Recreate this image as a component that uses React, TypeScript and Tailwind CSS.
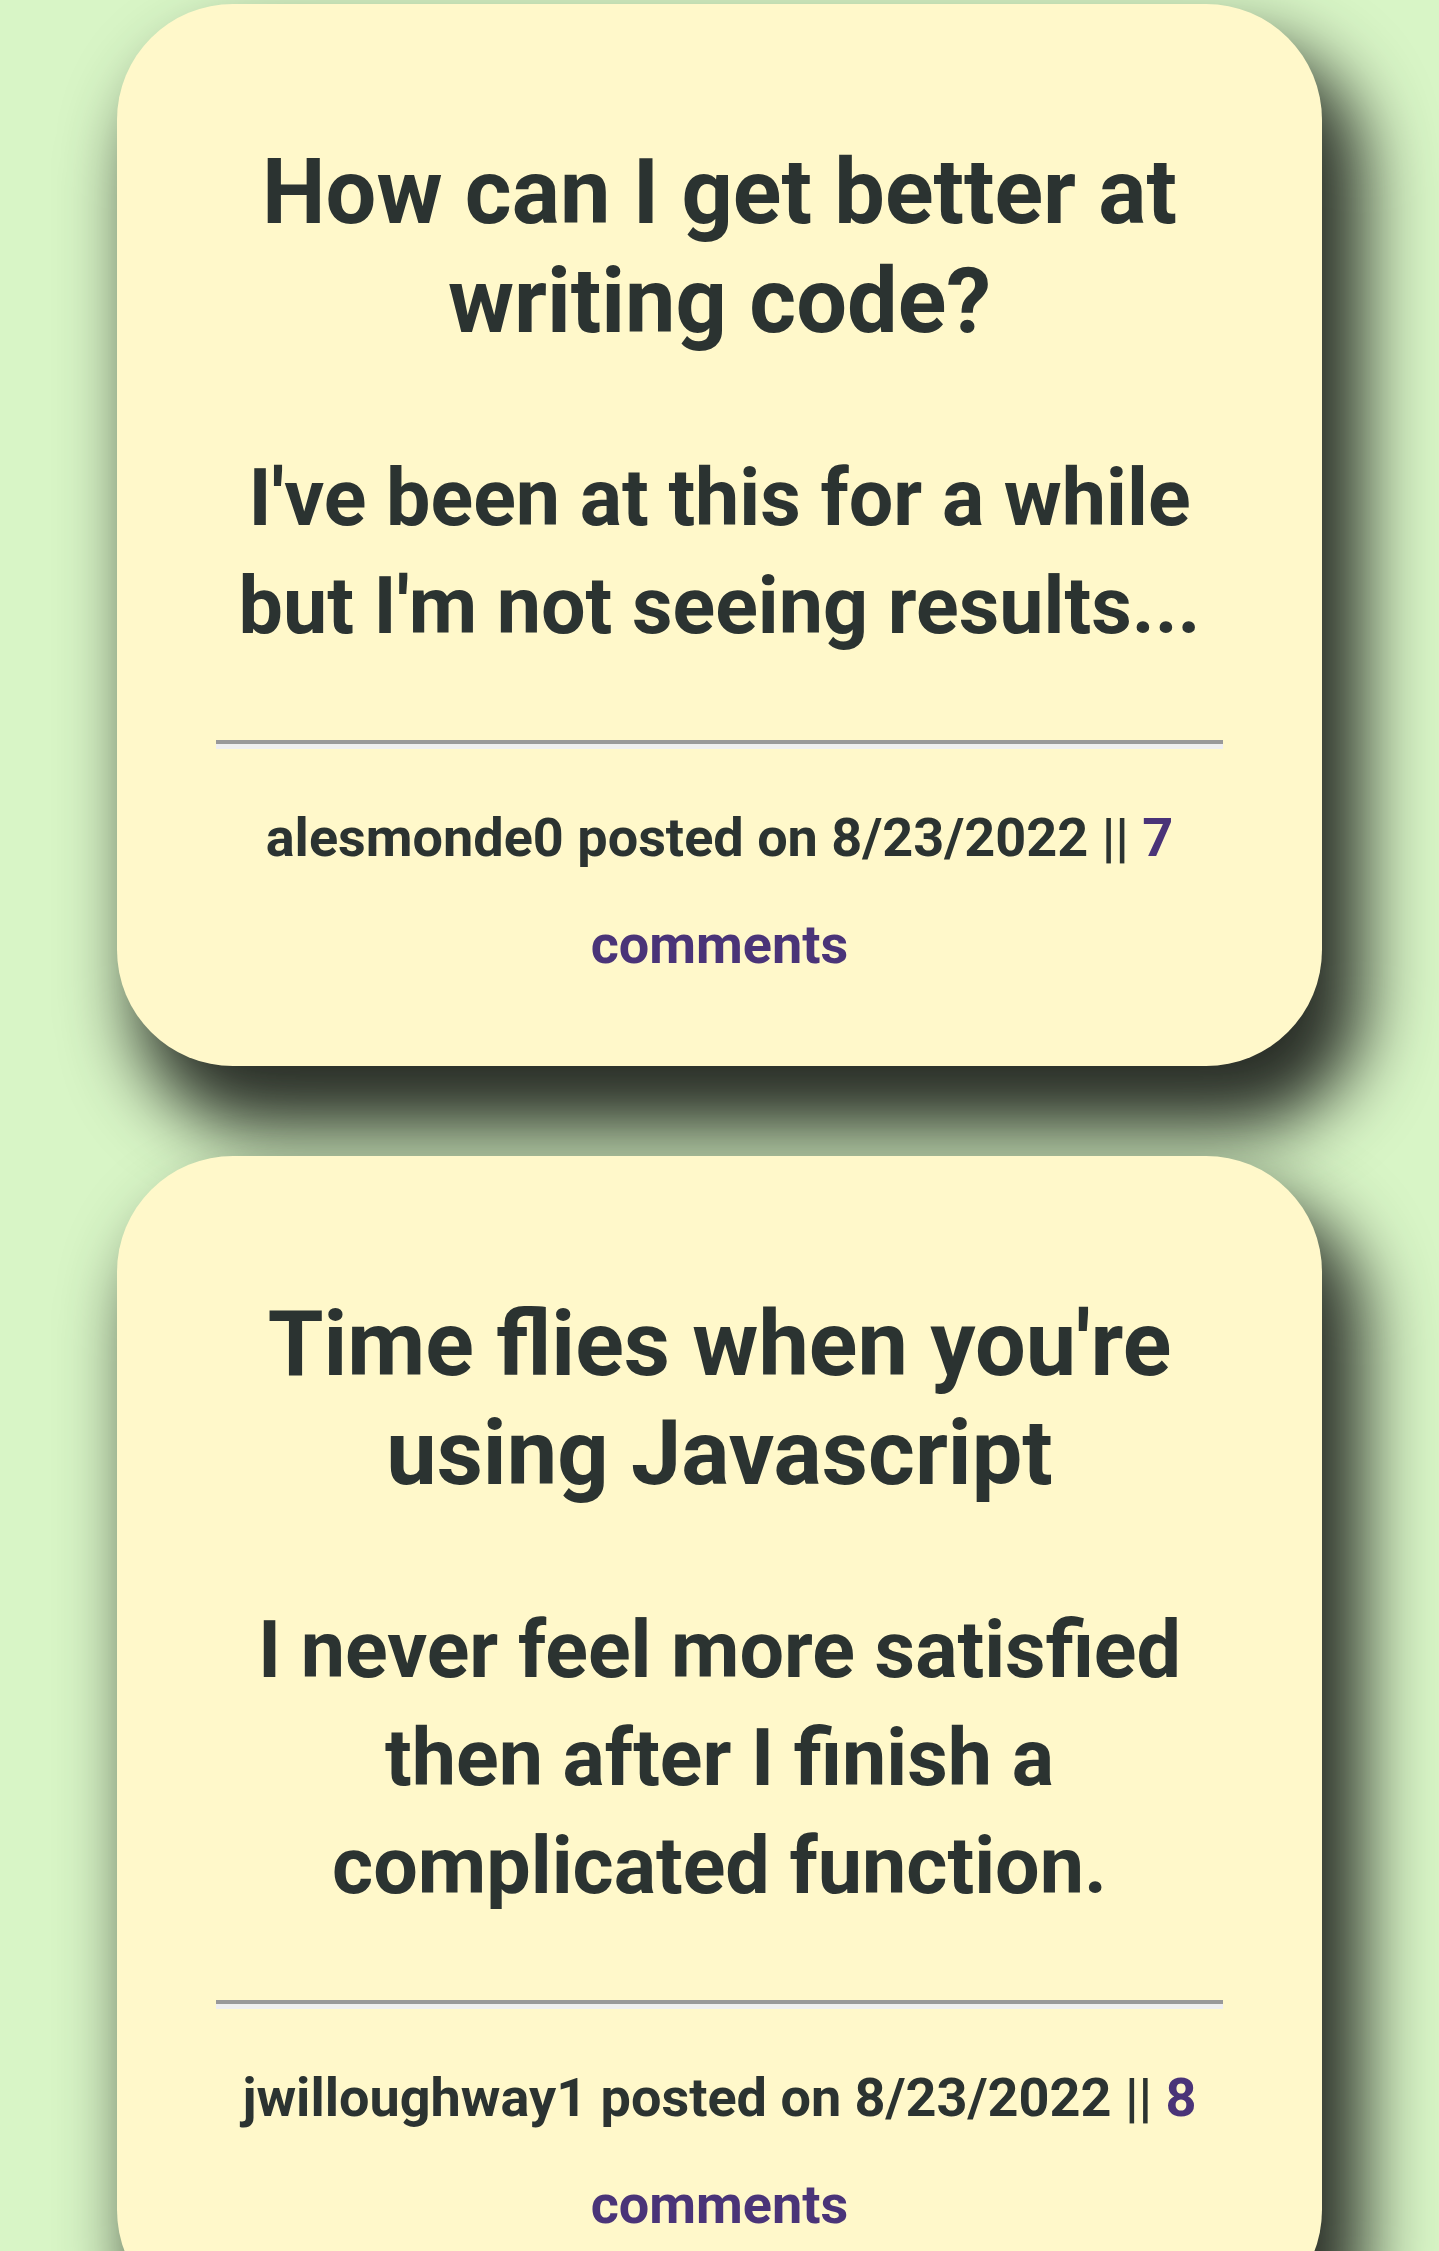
const posts = [
  {
    title: "How can I get better at writing code?",
    body: "I've been at this for a while but I'm not seeing results...",
    author: "alesmonde0",
    date: "8/23/2022",
    comments: 7,
  },
  {
    title: "Time flies when you're using Javascript",
    body: "I never feel more satisfied then after I finish a complicated function.",
    author: "jwilloughway1",
    date: "8/23/2022",
    comments: 8,
  },
];

const App = () => {
  return (
    <div className="min-h-screen bg-[#d8f5c6] font-['Roboto',sans-serif] text-[#2b3331] pt-[4px] pb-24">
      <div className="flex flex-col items-center gap-[90px]">
        {posts.map((post, i) => (
          <div
            key={i}
            className="w-[1205px] rounded-[116px] bg-[#fff8ca] px-[99px] pt-[134px] pb-[68px] text-center shadow-[30px_52px_70px_12px_#2a2f28]"
          >
            {/* Title */}
            <h1 className="text-[90px] leading-[109px] font-bold">{post.title}</h1>

            {/* Body */}
            <h2 className="mt-[88px] text-[79px] leading-[108px] font-bold">{post.body}</h2>

            <hr className="mt-[80px] h-[9px] border-0 border-t-[4px] border-t-[#999999] bg-[#efefef]" />

            {/* Meta */}
            <p className="mt-[35px] text-[54px] leading-[107px] font-bold">
              {post.author} posted on {post.date} ||{" "}
              <a href="#" className="text-[#4a3478]">
                {post.comments} comments
              </a>
            </p>
          </div>
        ))}
      </div>
    </div>
  );
};

export default App;
